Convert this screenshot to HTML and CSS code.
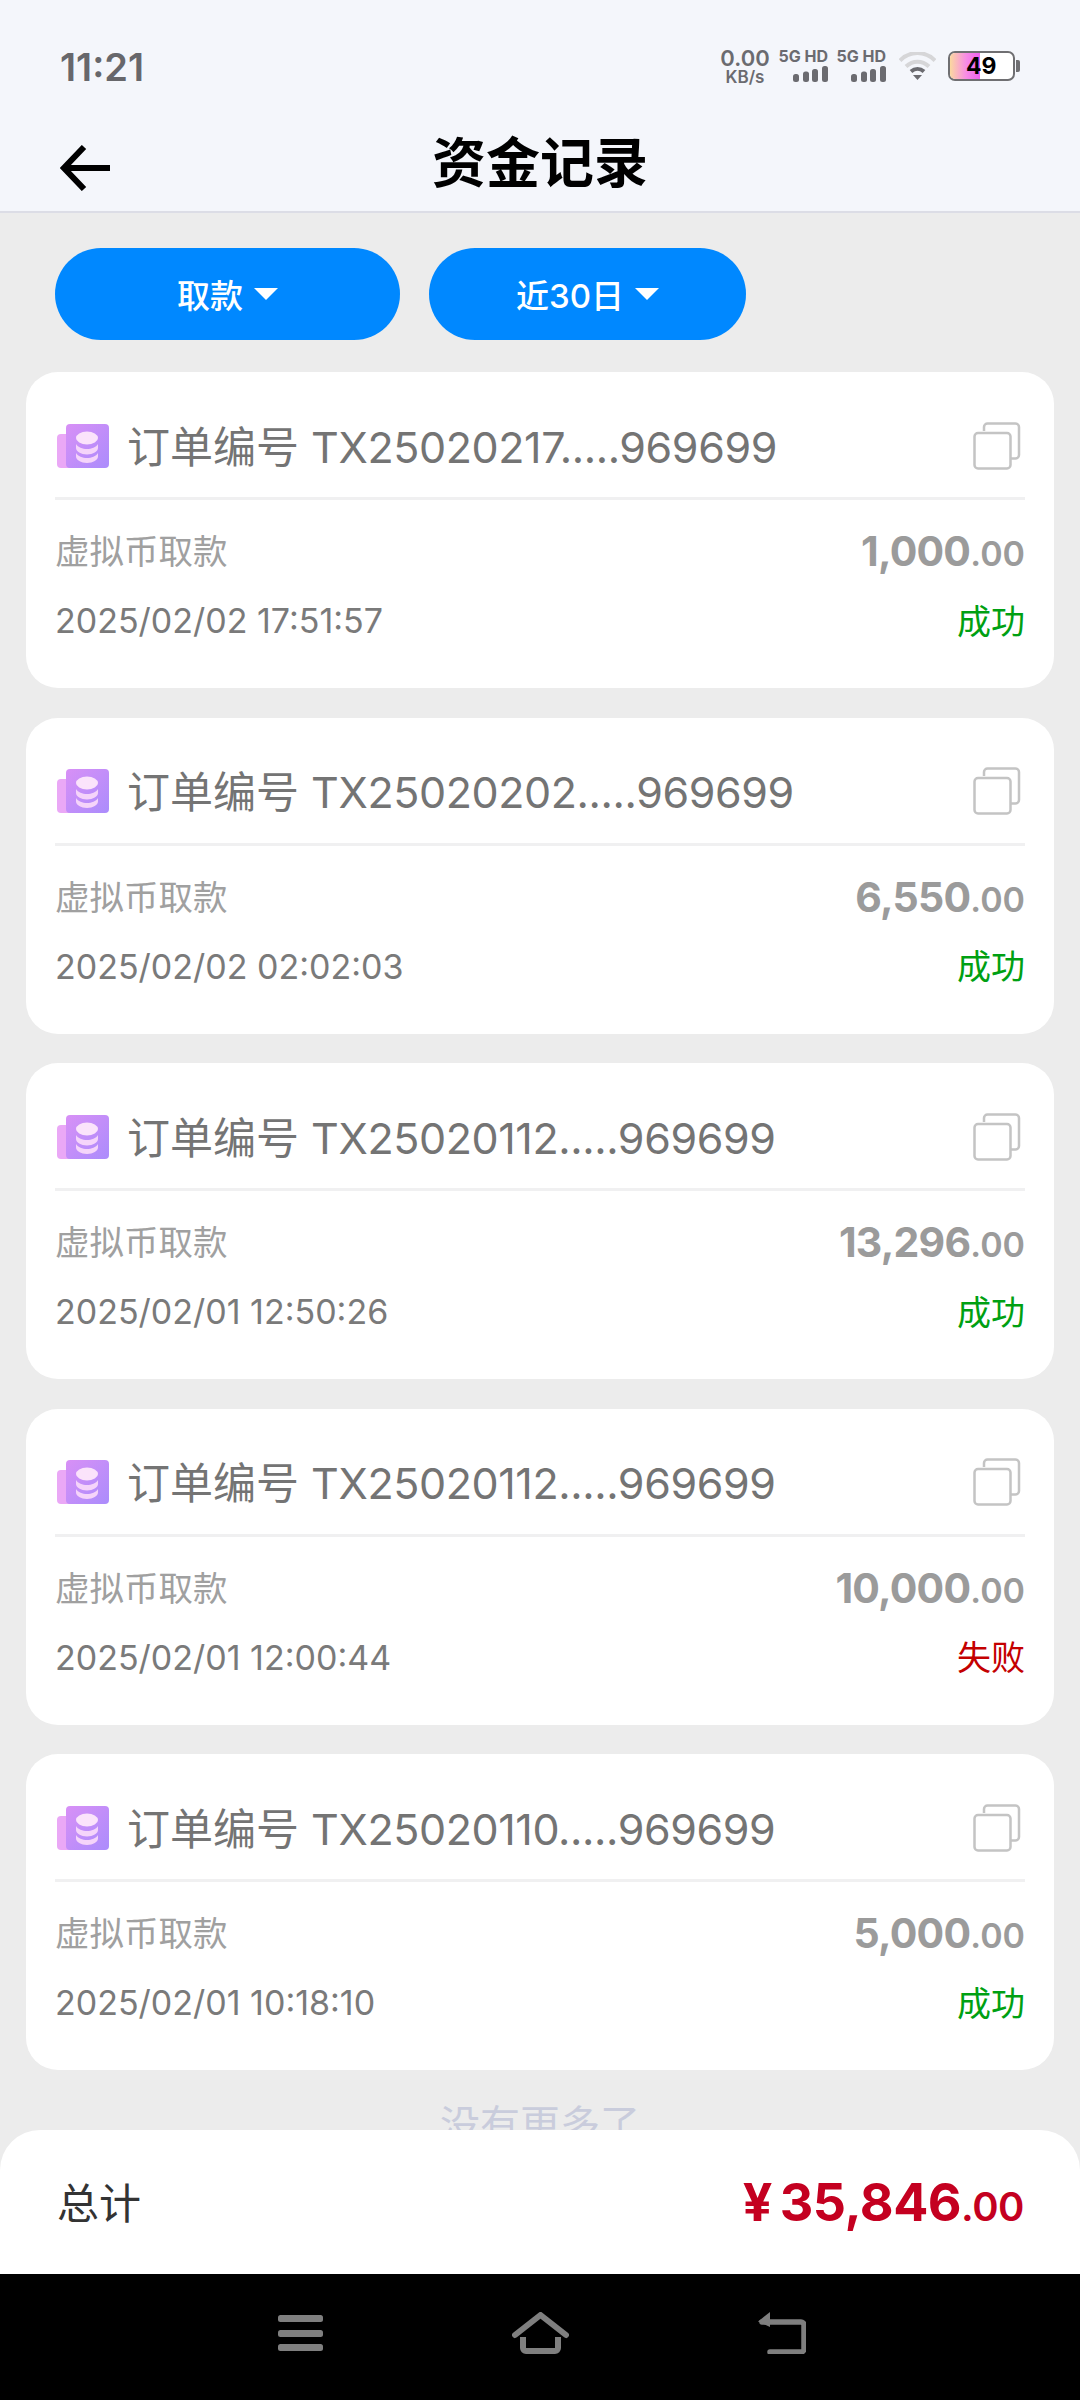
FILE: index.html
```html
<!DOCTYPE html>
<html lang="zh-CN">
<head>
    <meta charset="UTF-8">
    <meta name="viewport" content="width=device-width, initial-scale=1.0">
    <title>资金记录</title>
    <link rel="stylesheet" href="styles.css">
</head>
<body>
    <svg class="defs" width="0" height="0">
        <defs>
            <linearGradient id="coinGrad" x1="0" y1="0" x2="1" y2="1">
                <stop offset="0" stop-color="#d890f6"/>
                <stop offset="1" stop-color="#ab8cfc"/>
            </linearGradient>
            <symbol id="coin" viewBox="0 0 52 44">
                <path d="M4 10h12v34H4a4 4 0 0 1-4-4V14a4 4 0 0 1 4-4z" fill="#eaa8f6"/>
                <rect x="9" y="0" width="43" height="44" rx="4" fill="url(#coinGrad)"/>
                <ellipse cx="30" cy="14" rx="11" ry="6.500" fill="#fbe3fb"/>
                <path d="M19 20c2 3.500 6.500 5 11 5s9-1.500 11-5v4c0 3.500-5 6.500-11 6.500S19 27.500 19 24z" fill="#f5d4fa"/>
                <path d="M19 29c2 3.500 6.500 5 11 5s9-1.500 11-5v3.500c0 3.500-5 6.500-11 6.500s-11-3-11-6.500z" fill="#f5d4fa"/>
            </symbol>
            <symbol id="copy" viewBox="0 0 48 48">
                <path d="M11 9V5a3.500 3.500 0 0 1 3.500-3.500h28A3.500 3.500 0 0 1 46 5v28a3.500 3.500 0 0 1-3.500 3.500H38" fill="none" stroke="#c4c4c4" stroke-width="2.500"/>
                <rect x="1.500" y="11" width="36" height="35.500" rx="3.500" fill="none" stroke="#c4c4c4" stroke-width="2.500"/>
            </symbol>
            <symbol id="bars" viewBox="0 0 35 16">
                <rect x="0" y="8" width="6" height="8" rx="2.500" fill="#6b6b70"/>
                <rect x="10" y="5.500" width="6" height="10.500" rx="2.500" fill="#6b6b70"/>
                <rect x="19" y="3" width="6" height="13" rx="2.500" fill="#6b6b70"/>
                <rect x="29" y="0" width="6" height="16" rx="2.500" fill="#6b6b70"/>
            </symbol>
        </defs>
    </svg>

    <div class="top">
        <div class="statusbar">
            <span class="clock">11:21</span>
            <div class="status-icons">
                <div class="speed"><span class="speed-num">0.00</span><span class="speed-unit">KB/s</span></div>
                <div class="sim"><span>5G HD</span><svg width="35" height="16"><use href="#bars"/></svg></div>
                <div class="sim"><span>5G HD</span><svg width="35" height="16"><use href="#bars"/></svg></div>
                <svg class="wifi" width="37" height="28" viewBox="0 0 37 28">
                    <path d="M1 8.500C11 -1.500 26 -1.500 36 8.500" fill="none" stroke="#d6d6d8" stroke-width="4"/>
                    <path d="M7 14.500C14 8 23 8 30 14.500" fill="none" stroke="#d6d6d8" stroke-width="4"/>
                    <path d="M12 19.500C16 16 21 16 25 19.500" fill="none" stroke="#6b6b70" stroke-width="4"/>
                    <path d="M14 23h9l-4.500 5z" fill="#6b6b70"/>
                </svg>
                <div class="battery">
                    <div class="battery-body"><span class="battery-fill"></span><span class="battery-num">49</span></div>
                    <span class="battery-cap"></span>
                </div>
            </div>
        </div>
        <div class="navbar">
            <svg class="back" width="50" height="46" viewBox="0 0 50 46">
                <path d="M24 2L4 23l20 21M4 23h46" fill="none" stroke="#000" stroke-width="6"/>
            </svg>
            <h1 class="page-title">资金记录</h1>
        </div>
    </div>

    <div class="list-area">
        <div class="filters">
            <button class="filter filter-type">取款<i class="caret"></i></button>
            <button class="filter filter-date">近30日<i class="caret"></i></button>
        </div>

        <div class="cards">
            <div class="card">
                <div class="card-head">
                    <svg class="coin" width="52" height="44"><use href="#coin"/></svg>
                    <span class="order">订单编号 <span class="order-no">TX25020217.....969699</span></span>
                    <svg class="copy" width="48" height="48"><use href="#copy"/></svg>
                </div>
                <div class="card-row row-first"><span class="kind">虚拟币取款</span><span class="amount">1,000<small>.00</small></span></div>
                <div class="card-row"><span class="date">2025/02/02 17:51:57</span><span class="state ok">成功</span></div>
            </div>
            <div class="card">
                <div class="card-head">
                    <svg class="coin" width="52" height="44"><use href="#coin"/></svg>
                    <span class="order">订单编号 <span class="order-no">TX25020202.....969699</span></span>
                    <svg class="copy" width="48" height="48"><use href="#copy"/></svg>
                </div>
                <div class="card-row row-first"><span class="kind">虚拟币取款</span><span class="amount">6,550<small>.00</small></span></div>
                <div class="card-row"><span class="date">2025/02/02 02:02:03</span><span class="state ok">成功</span></div>
            </div>
            <div class="card">
                <div class="card-head">
                    <svg class="coin" width="52" height="44"><use href="#coin"/></svg>
                    <span class="order">订单编号 <span class="order-no">TX25020112.....969699</span></span>
                    <svg class="copy" width="48" height="48"><use href="#copy"/></svg>
                </div>
                <div class="card-row row-first"><span class="kind">虚拟币取款</span><span class="amount">13,296<small>.00</small></span></div>
                <div class="card-row"><span class="date">2025/02/01 12:50:26</span><span class="state ok">成功</span></div>
            </div>
            <div class="card">
                <div class="card-head">
                    <svg class="coin" width="52" height="44"><use href="#coin"/></svg>
                    <span class="order">订单编号 <span class="order-no">TX25020112.....969699</span></span>
                    <svg class="copy" width="48" height="48"><use href="#copy"/></svg>
                </div>
                <div class="card-row row-first"><span class="kind">虚拟币取款</span><span class="amount">10,000<small>.00</small></span></div>
                <div class="card-row"><span class="date">2025/02/01 12:00:44</span><span class="state fail">失败</span></div>
            </div>
            <div class="card">
                <div class="card-head">
                    <svg class="coin" width="52" height="44"><use href="#coin"/></svg>
                    <span class="order">订单编号 <span class="order-no">TX25020110.....969699</span></span>
                    <svg class="copy" width="48" height="48"><use href="#copy"/></svg>
                </div>
                <div class="card-row row-first"><span class="kind">虚拟币取款</span><span class="amount">5,000<small>.00</small></span></div>
                <div class="card-row"><span class="date">2025/02/01 10:18:10</span><span class="state ok">成功</span></div>
            </div>
        </div>

        <div class="no-more">没有更多了</div>
    </div>

    <div class="total-bar">
        <span class="total-label">总计</span>
        <span class="total-amount"><span class="yen">¥</span>35,846<small>.00</small></span>
    </div>

    <div class="sysnav">
        <svg width="45" height="36" viewBox="0 0 45 36">
            <rect x="0" y="0" width="45" height="7" rx="2.500" fill="#7f7f7f"/>
            <rect x="0" y="15" width="45" height="7" rx="2.500" fill="#7f7f7f"/>
            <rect x="0" y="29" width="45" height="7" rx="2.500" fill="#7f7f7f"/>
        </svg>
        <svg width="57" height="42" viewBox="0 0 57 42">
            <path d="M3 23L28.500 3 54 23" fill="none" stroke="#7f7f7f" stroke-width="6" stroke-linejoin="round" stroke-linecap="round"/>
            <path d="M11 25v11a3 3 0 0 0 3 3h29a3 3 0 0 0 3-3V25" fill="none" stroke="#7f7f7f" stroke-width="6"/>
        </svg>
        <svg width="48" height="42" viewBox="0 0 48 42">
            <path d="M12 0L0 9.500 12 15z" fill="#7f7f7f"/>
            <path d="M4 10h39a3 3 0 0 1 3 3v24a3 3 0 0 1-3 3H12" fill="none" stroke="#7f7f7f" stroke-width="5.500" stroke-linecap="round"/>
        </svg>
    </div>
</body>
</html>
```

FILE: styles.css
```css
* {
    box-sizing: border-box;
}

html, body {
    margin: 0;
    padding: 0;
}

body {
    width: 1080px;
    height: 2400px;
    display: flex;
    flex-direction: column;
    overflow: hidden;
    background-color: #ececec;
    font-family: Inter, "Noto Sans CJK SC", sans-serif;
}

.defs {
    display: block;
    height: 0;
}

.top {
    height: 213px;
    flex-shrink: 0;
    background-color: #f4f6fb;
    border-bottom: 2px solid #dcdde6;
}

.statusbar {
    height: 112px;
    padding: 20px 60px 0;
    display: flex;
    justify-content: space-between;
    align-items: center;
}

.clock {
    font-size: 38px;
    font-weight: 600;
    color: #67676b;
    padding-top: 2px;
}

.status-icons {
    display: flex;
    align-items: center;
}

.speed {
    width: 50px;
    display: flex;
    flex-direction: column;
    align-items: center;
    color: #6b6b70;
    font-weight: 600;
    line-height: 1;
}

.speed-num {
    font-size: 22px;
}

.speed-unit {
    font-size: 17px;
}

.sim {
    width: 48px;
    margin-left: 10px;
    display: flex;
    flex-direction: column;
    align-items: flex-end;
    gap: 4px;
    color: #6b6b70;
    font-size: 16px;
    font-weight: 700;
    line-height: 12px;
    white-space: nowrap;
}

.wifi {
    margin-left: 13px;
}

.battery {
    margin-left: 12px;
    display: flex;
    align-items: center;
}

.battery-body {
    width: 67px;
    height: 30px;
    border: 2px solid #6f6f72;
    border-radius: 7px;
    background-color: #fff;
    display: flex;
    align-items: center;
    position: relative;
    overflow: hidden;
}

.battery-fill {
    width: 30px;
    height: 100%;
    background: linear-gradient(90deg, #fbd8a0, #f78ae6 55%, #f060f0);
}

.battery-num {
    position: absolute;
    left: 16px;
    font-size: 23px;
    font-weight: 700;
    color: #000;
}

.battery-cap {
    width: 4px;
    height: 12px;
    margin-left: 1px;
    background-color: #6f6f72;
    border-radius: 0 2px 2px 0;
}

.navbar {
    height: 99px;
    padding-left: 60px;
    display: grid;
    grid-template-columns: 1fr auto 1fr;
    align-items: center;
}

.back {
    margin-top: 12px;
}

.page-title {
    margin: 0 0 4px;
    font-size: 54px;
    font-weight: 700;
    color: #000;
    font-family: "Noto Sans CJK SC", sans-serif;
    transform: translateX(-30px);
}

.list-area {
    flex: 1;
    min-height: 0;
    overflow: hidden;
}

.filters {
    display: flex;
    gap: 29px;
    padding: 35px 0 0 55px;
}

.filter {
    height: 92px;
    border: none;
    border-radius: 46px;
    background-color: #0088ff;
    color: #fff;
    font-family: inherit;
    font-size: 33px;
    font-weight: 500;
    display: flex;
    justify-content: center;
    align-items: center;
}

.filter-type {
    width: 345px;
}

.filter-date {
    width: 317px;
}

.caret {
    width: 0;
    height: 0;
    margin-left: 11px;
    border-left: 12px solid transparent;
    border-right: 12px solid transparent;
    border-top: 12px solid #fff;
}

.cards {
    display: flex;
    flex-direction: column;
    gap: 29.500px;
    padding: 32px 26px 0;
}

.card {
    height: 316px;
    padding: 0 29px;
    border-radius: 32px;
    background-color: #fff;
}

.card-head {
    height: 128px;
    padding-top: 22px;
    display: flex;
    align-items: center;
    border-bottom: 3px solid #f0f0f1;
}

.coin {
    margin-left: 2px;
}

.order {
    flex: 1;
    margin: 0 0 4px 18px;
    font-size: 43px;
    color: #747474;
    white-space: nowrap;
}

.order-no {
    letter-spacing: -0.400px;
}

.copy {
    margin-right: 4px;
}

.card-row {
    height: 70px;
    display: flex;
    justify-content: space-between;
    align-items: center;
}

.row-first {
    margin-top: 14px;
}

.kind {
    font-size: 34.500px;
    color: #a0a0a0;
}

.amount {
    font-size: 41px;
    font-weight: 700;
    color: #9b9b9b;
    padding-top: 4px;
    letter-spacing: -0.800px;
}

.amount small {
    font-size: 34px;
    font-weight: 600;
    letter-spacing: 0;
}

.date {
    font-size: 34px;
    color: #7a7a7a;
    padding-top: 3px;
}

.state {
    font-size: 34px;
}

.ok {
    color: #00a012;
}

.fail {
    color: #c40000;
}

.no-more {
    margin-top: 23px;
    text-align: center;
    font-size: 40px;
    color: #c9ccdc;
}

.total-bar {
    height: 144px;
    flex-shrink: 0;
    padding: 0 56px 0 57px;
    display: flex;
    justify-content: space-between;
    align-items: center;
    background-color: #fff;
    border-radius: 40px 40px 0 0;
}

.total-label {
    font-size: 42px;
    color: #333;
    padding-bottom: 4px;
}

.total-amount {
    font-size: 52px;
    font-weight: 700;
    color: #c40020;
    letter-spacing: -0.500px;
}

.total-amount small {
    font-size: 40px;
    font-weight: 600;
}

.yen {
    margin-right: 8px;
}

.sysnav {
    height: 126px;
    flex-shrink: 0;
    background-color: #000;
    display: grid;
    grid-template-columns: 45px 57px 48px;
    justify-content: center;
    column-gap: 189px;
    align-items: center;
    padding: 0 0 8px 3px;
}
```
